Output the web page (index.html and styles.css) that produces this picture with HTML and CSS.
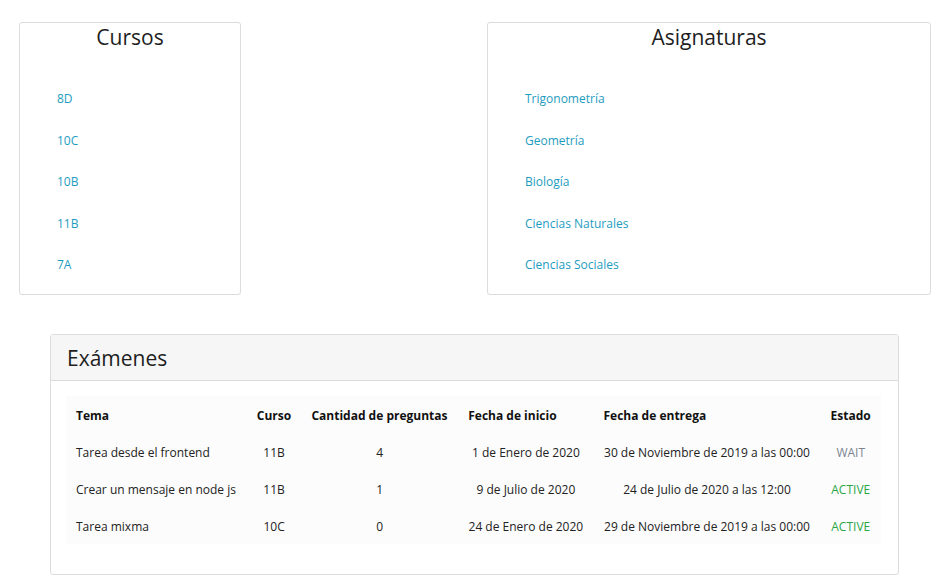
FILE: index.html
```html
<!DOCTYPE html>
<html lang="es">
<head>
<meta charset="utf-8">
<title>Panel</title>
<link rel="stylesheet" href="styles.css">
</head>
<body>
<div class="page">
  <div class="top-row">
    <section class="box box-cursos">
      <h3 class="box-title">Cursos</h3>
      <ul class="link-list">
        <li><a href="#">8D</a></li>
        <li><a href="#">10C</a></li>
        <li><a href="#">10B</a></li>
        <li><a href="#">11B</a></li>
        <li><a href="#">7A</a></li>
      </ul>
    </section>
    <div class="spacer"></div>
    <section class="box box-asig">
      <h3 class="box-title">Asignaturas</h3>
      <ul class="link-list">
        <li><a href="#">Trigonometría</a></li>
        <li><a href="#">Geometría</a></li>
        <li><a href="#">Biología</a></li>
        <li><a href="#">Ciencias Naturales</a></li>
        <li><a href="#">Ciencias Sociales</a></li>
      </ul>
    </section>
  </div>

  <section class="card">
    <div class="card-header"><h3 class="card-title">Exámenes</h3></div>
    <div class="card-body">
      <table class="exam-table">
        <thead>
          <tr>
            <th>Tema</th>
            <th>Curso</th>
            <th>Cantidad de preguntas</th>
            <th>Fecha de inicio</th>
            <th>Fecha de entrega</th>
            <th>Estado</th>
          </tr>
        </thead>
        <tbody>
          <tr>
            <td class="left">Tarea desde el frontend</td>
            <td>11B</td>
            <td>4</td>
            <td>1 de Enero de 2020</td>
            <td>30 de Noviembre de 2019 a las 00:00</td>
            <td class="st-wait">WAIT</td>
          </tr>
          <tr>
            <td class="left">Crear un mensaje en node js</td>
            <td>11B</td>
            <td>1</td>
            <td>9 de Julio de 2020</td>
            <td>24 de Julio de 2020 a las 12:00</td>
            <td class="st-active">ACTIVE</td>
          </tr>
          <tr>
            <td class="left">Tarea mixma</td>
            <td>10C</td>
            <td>0</td>
            <td>24 de Enero de 2020</td>
            <td>29 de Noviembre de 2019 a las 00:00</td>
            <td class="st-active">ACTIVE</td>
          </tr>
        </tbody>
      </table>
    </div>
  </section>
</div>
</body>
</html>
```

FILE: styles.css
```css
* { box-sizing: border-box; }

html, body {
  margin: 0;
  padding: 0;
  background: #fff;
}

body {
  font-family: "Open Sans", "Noto Sans", sans-serif;
  font-size: 12px;
  color: #212529;
}

.page {
  padding: 22px 19px 0 19px;
}

.top-row {
  display: grid;
  grid-template-columns: 222px 1fr 444px;
  grid-template-rows: 273px;
}

.box {
  border: 1px solid #dcdcdc;
  border-radius: 3px;
  background: #fff;
  overflow: hidden;
}

.box-title {
  margin: 0;
  padding-top: 0;
  text-align: center;
  font-size: 21px;
  font-weight: 500;
  line-height: 28px;
  color: #1e1e1e;
}

.link-list {
  list-style: none;
  margin: 0;
  padding: 39px 0 0 37px;
  display: flex;
  flex-direction: column;
  gap: 23.5px;
}

.link-list li {
  line-height: 18px;
}

.link-list a {
  color: #1e9cc0;
  text-decoration: none;
}

.card {
  width: 849px;
  margin: 39px 0 0 31px;
  border: 1px solid #dcdcdc;
  border-radius: 3px;
  background: #fff;
}

.card-header {
  background: #f6f6f6;
  border-bottom: 1px solid #dcdcdc;
  height: 46px;
  padding: 0 16px;
  display: flex;
  align-items: center;
}

.card-title {
  margin: 0;
  font-size: 21px;
  font-weight: 500;
  color: #1e1e1e;
}

.card-body {
  padding: 15px 17px 30px 15px;
}

.exam-table {
  width: 100%;
  border-collapse: collapse;
  background: #fcfcfc;
}

.exam-table th,
.exam-table td {
  padding: 2px 10px 0 10px;
  height: 37px;
  white-space: nowrap;
}

.exam-table th {
  text-align: left;
  font-weight: 700;
  color: #111;
}

.exam-table td {
  text-align: center;
  color: #222;
}

.exam-table td.left {
  text-align: left;
}

.st-wait { color: #7b8590 !important; }
.st-active { color: #2aa745 !important; }
```
